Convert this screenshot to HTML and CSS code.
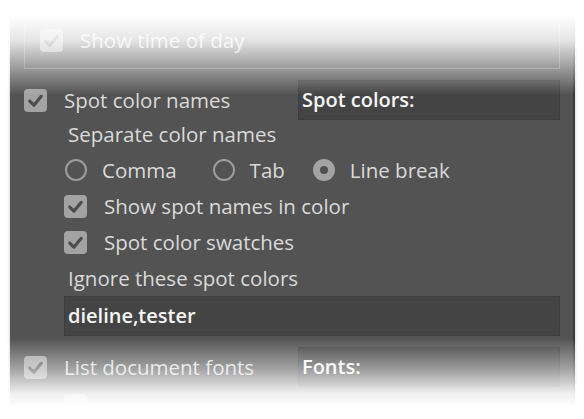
FILE: index.html
```html
<!DOCTYPE html>
<html lang="en">
<head>
  <meta charset="UTF-8">
  <title>Spot color options</title>
  <link rel="stylesheet" href="styles.css">
</head>
<body>
  <div class="panel">
    <!-- Time group (cut off at top) -->
    <div class="group">
      <div class="row">
        <span class="check"><svg viewBox="0 0 22 22"><path d="M5.5 11.5 L9.5 15.5 L16.5 7"/></svg></span>
        <span class="label">Show time of day</span>
      </div>
    </div>

    <!-- Spot colors -->
    <div class="main-row">
      <div class="main-left">
        <span class="check"><svg viewBox="0 0 22 22"><path d="M5.5 11.5 L9.5 15.5 L16.5 7"/></svg></span>
        <span class="label">Spot color names</span>
      </div>
      <div class="field">Spot colors:</div>
    </div>

    <div class="sub">
      <div class="sub-label">Separate color names</div>
      <div class="row radios">
        <span class="radio-item"><span class="radio"></span><span class="label">Comma</span></span>
        <span class="radio-item"><span class="radio"></span><span class="label">Tab</span></span>
        <span class="radio-item"><span class="radio on"></span><span class="label">Line break</span></span>
      </div>
      <div class="row">
        <span class="check"><svg viewBox="0 0 22 22"><path d="M5.5 11.5 L9.5 15.5 L16.5 7"/></svg></span>
        <span class="label">Show spot names in color</span>
      </div>
      <div class="row">
        <span class="check"><svg viewBox="0 0 22 22"><path d="M5.5 11.5 L9.5 15.5 L16.5 7"/></svg></span>
        <span class="label">Spot color swatches</span>
      </div>
      <div class="row sub-text">Ignore these spot colors</div>
      <div class="field wide">dieline,tester</div>
    </div>

    <!-- Fonts -->
    <div class="main-row fonts">
      <div class="main-left">
        <span class="check"><svg viewBox="0 0 22 22"><path d="M5.5 11.5 L9.5 15.5 L16.5 7"/></svg></span>
        <span class="label">List document fonts</span>
      </div>
      <div class="field">Fonts:</div>
    </div>
    <div class="sub">
      <div class="row">
        <span class="check"></span>
      </div>
    </div>
  </div>

  <div class="fade-top"></div>
  <div class="fade-bottom"></div>
</body>
</html>
```

FILE: styles.css
```css
/* General */
body {
  margin: 0;
  background: #fff;
  font-family: "Open Sans", "DejaVu Sans", sans-serif;
  font-size: 20.5px;
  color: #dadada;
  height: 419px;
  overflow: hidden;
}

.panel {
  margin: 0 9px 0 10px;
  padding: 0 13px 0 14px;
  height: 419px;
  overflow: hidden;
  background: #535353;
  border-right: 2px solid #3b3b3b;
  box-shadow: 0 0 3px rgba(0, 0, 0, 0.25);
}

/* Rows */
.row {
  display: flex;
  align-items: center;
  height: 36px;
}

.label {
  white-space: nowrap;
}

/* Checkbox */
.check {
  flex: none;
  width: 23px;
  height: 23px;
  margin-right: 17px;
  border-radius: 4px;
  background: #a3a3a3;
}

.check svg {
  display: block;
  width: 23px;
  height: 23px;
  fill: none;
  stroke: #4c4c4c;
  stroke-width: 3;
  stroke-linecap: round;
  stroke-linejoin: round;
}

/* Group box at top */
.group {
  height: 64px;
  margin-top: 5px;
  padding: 0 15px 10px;
  border: 1px solid #7c7c7c;
  display: flex;
  flex-direction: column;
  justify-content: flex-end;
  box-sizing: border-box;
}

/* Main option row */
.main-row {
  display: flex;
  align-items: center;
  height: 40px;
  margin-top: 11px;
}

.main-left {
  display: flex;
  align-items: center;
  width: 274px;
}

.field {
  flex: 1;
  height: 40px;
  box-sizing: border-box;
  padding: 0 3px;
  line-height: 38px;
  background: #444;
  border: 1px solid #3e3e3e;
  color: #f6f6f6;
  font-weight: 600;
  font-size: 20px;
}

/* Sub options */
.sub {
  padding-left: 40px;
}

.sub-label {
  height: 28px;
  line-height: 28px;
  padding-left: 4px;
}

.sub-text {
  padding-left: 4px;
}

.radios {
  margin-top: 4px;
}

.radio-item {
  display: flex;
  align-items: center;
  margin-right: 35px;
}

.radio-item:nth-child(2) {
  margin-right: 27px;
}

.radio {
  width: 22px;
  height: 22px;
  box-sizing: border-box;
  margin: 0 15px 0 1px;
  border: 2px solid #9d9d9d;
  border-radius: 50%;
}

.radio.on {
  border: 7px solid #a3a3a3;
  background: #505050;
}

.field.wide {
  flex: none;
}

.fonts {
  margin-top: 11px;
}

/* Faded edges of the screenshot */
.fade-top,
.fade-bottom {
  position: absolute;
  left: 0;
  right: 0;
  pointer-events: none;
}

.fade-top {
  top: 0;
  height: 95px;
  background: linear-gradient(#fff 16px, rgba(255, 255, 255, 0.85) 40px, rgba(255, 255, 255, 0.45) 66px, rgba(255, 255, 255, 0));
}

.fade-bottom {
  top: 338px;
  height: 81px;
  background: linear-gradient(rgba(255, 255, 255, 0), rgba(255, 255, 255, 0.45) 30px, rgba(255, 255, 255, 0.9) 55px, #fff 68px);
}
```
